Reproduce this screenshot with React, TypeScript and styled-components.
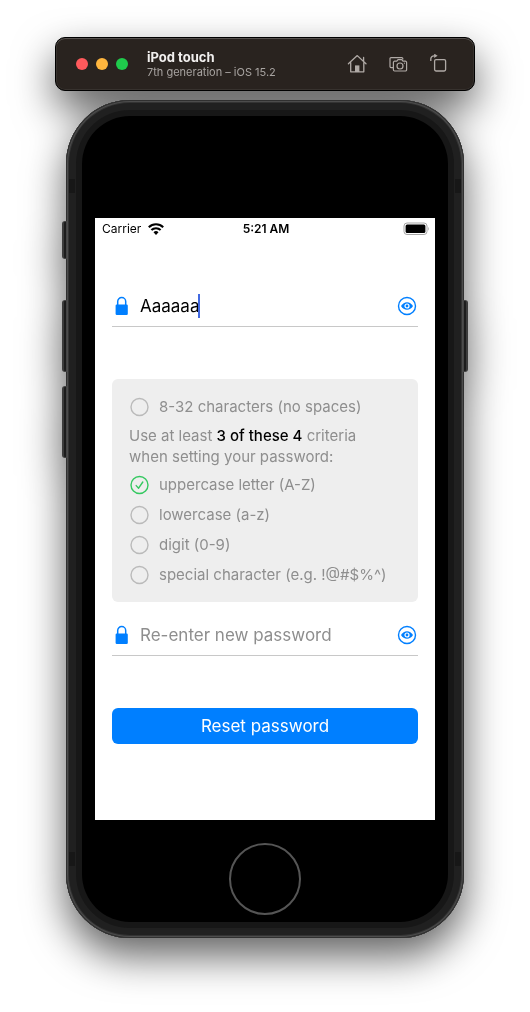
import React, { useState } from "react";
import styled, { createGlobalStyle } from "styled-components";

const blue = "#007fff";

const GlobalStyle = createGlobalStyle`
  * { box-sizing: border-box; }
  body {
    margin: 0;
    background: #fff;
    font-family: Inter, "Liberation Sans", sans-serif;
    color: #000;
  }
  button, input { font: inherit; margin: 0; padding: 0; border: 0; background: none; }
`;

const Page = styled.main`
  display: flex;
  justify-content: center;
  padding: 37px 55px 74px;
`;

const Simulator = styled.div`
  display: flex;
  flex-direction: column;
  gap: 9px;
  width: 100%;
  max-width: 420px;
  filter: drop-shadow(0 18px 20px rgba(0, 0, 0, 0.62));
`;

const TitleBar = styled.header`
  display: flex;
  align-items: center;
  height: 54px;
  padding: 0 25px 0 20px;
  border: 1px solid #000;
  border-radius: 10px;
  background: #29231f;
  box-shadow: inset 0 1px 0 #56514e, inset 0 0 0 1px #37322e;
`;

const Lights = styled.div`
  display: flex;
  gap: 8px;
  margin-right: 19px;
`;

const Light = styled.button<{ $color: string }>`
  width: 12px;
  height: 12px;
  border-radius: 50%;
  background: ${(p) => p.$color};
`;

const Titles = styled.div`
  flex: 1;
`;

const DeviceName = styled.h1`
  margin: 0;
  font-size: 13px;
  line-height: 16px;
  font-weight: 700;
  color: #f1efee;
`;

const DeviceInfo = styled.p`
  margin: 0;
  font-size: 11px;
  line-height: 14px;
  color: #a8a4a1;
`;

const Tools = styled.div`
  display: flex;
  gap: 21px;
`;

const Tool = styled.button`
  display: flex;
  width: 20px;
  height: 20px;
  color: #b0aaa6;
`;

const Phone = styled.section`
  position: relative;
  margin: 0 11px;
  padding: 16px;
  border-radius: 64px;
  background: #171717;
  box-shadow: inset 0 0 0 1px #303030, inset 0 0 0 2px #4c4c4c, inset 0 0 0 3px #333,
    inset 0 0 0 10px #202020;
`;

const Bezel = styled.div`
  padding: 102px 13px 7px;
  border-radius: 48px;
  background: #000;
`;

const SideButton = styled.span<{ $side: "left" | "right"; $top: number; $height: number }>`
  position: absolute;
  top: ${(p) => p.$top}px;
  ${(p) => p.$side}: -4px;
  width: 5px;
  height: ${(p) => p.$height}px;
  border: 1px solid #444;
  border-${(p) => p.$side}: 2px solid #3c3c3c;
  border-radius: ${(p) => (p.$side === "left" ? "3px 0 0 3px" : "0 3px 3px 0")};
  background: #1c1c1c;
`;

const Antenna = styled.span<{ $side: "left" | "right"; $edge: "top" | "bottom" }>`
  position: absolute;
  ${(p) => p.$side}: 3px;
  ${(p) => p.$edge}: ${(p) => (p.$edge === "top" ? 79 : 72)}px;
  width: 6px;
  height: 14px;
  background: #171717;
`;

const Screen = styled.div`
  background: #fff;
`;

const StatusBar = styled.div`
  display: grid;
  grid-template-columns: 1fr auto 1fr;
  align-items: center;
  height: 22px;
  padding: 0 5px 0 7px;
  font-size: 12px;
  line-height: 16px;
`;

const Carrier = styled.span`
  display: flex;
  align-items: center;
  gap: 7px;
`;

const Clock = styled.time`
  font-weight: 600;
`;

const Battery = styled.svg`
  justify-self: end;
`;

const Form = styled.form`
  display: flex;
  flex-direction: column;
  padding: 47px 17px 76px;
`;

const Field = styled.div`
  display: flex;
  align-items: center;
  height: 40px;
  padding: 0 1px 2px 3px;
  border-bottom: 1px solid #c8c8c8;
`;

const FieldBody = styled.div`
  display: flex;
  align-items: center;
  flex: 1;
  min-width: 0;
  margin-left: 11px;
`;

const TextInput = styled.input<{ $fit?: boolean }>`
  ${(p) => (p.$fit ? "field-sizing: content;" : "width: 100%;")}
  min-width: 0;
  font-size: 17px;
  line-height: 24px;
  color: #000;
  outline: none;
  &::placeholder { color: #8e8e8e; opacity: 1; }
`;

const Caret = styled.span`
  width: 2px;
  height: 24px;
  margin-left: -1px;
  background: #4169e1;
`;

const Reveal = styled.button`
  display: flex;
  color: ${blue};
`;

const Panel = styled.section`
  display: flex;
  flex-direction: column;
  gap: 8px;
  margin: 52px 0 14px;
  padding: 18px 17px 17px;
  border-radius: 6px;
  background: #eee;
  color: #8e8e8e;
  font-size: 15px;
`;

const Hint = styled.p`
  margin: 0;
  line-height: 21px;
  strong { font-weight: 500; color: #000; }
`;

const Criteria = styled.div`
  display: flex;
  flex-direction: column;
  gap: 10px;
`;

const Criterion = styled.label`
  display: flex;
  align-items: center;
  gap: 10px;
  height: 20px;
  line-height: 20px;
  white-space: nowrap;
`;

const Mark = styled.span`
  display: grid;
  width: 20px;
  height: 20px;
  > * { grid-area: 1 / 1; }
`;

const MarkInput = styled.input`
  appearance: none;
  width: 20px;
  height: 20px;
  border-radius: 50%;
`;

const HomeButton = styled.button`
  display: block;
  width: 72px;
  height: 72px;
  margin: 23px auto 0;
  border: 2px solid #555;
  border-radius: 50%;
`;

const Submit = styled.button`
  height: 36px;
  margin-top: 52px;
  border-radius: 6px;
  background: ${blue};
  color: #fff;
  font-size: 17px;
`;

const HomeIcon = () => (
  <svg width="20" height="20" viewBox="0 0 20 20" fill="none" stroke="currentColor" strokeWidth="1.3" strokeLinejoin="round" strokeLinecap="round">
    <path d="M1.400 9.800 10.300 1.600l8.700 8.200M3.700 8.600v9.200h13.100V8.600M16.600 6.800V3.400" />
    <path d="M8 18v-6.600h4.400V18z" fill="currentColor" stroke="none" />
  </svg>
);

const CameraIcon = () => (
  <svg width="20" height="20" viewBox="0 0 20 20" fill="none" stroke="currentColor" strokeWidth="1.2" strokeLinejoin="round">
    <path d="M5 13.600H3a1 1 0 0 1-1-1V4.600a1 1 0 0 1 1-1h10.800a1 1 0 0 1 1 1v.8" />
    <path d="M6.600 7.200h2.200l1.200-1.600h3.800L15 7.200h2.400a1.200 1.200 0 0 1 1.200 1.200v7.400a1.200 1.200 0 0 1-1.200 1.200H6.600a1.200 1.200 0 0 1-1.200-1.200V8.400a1.200 1.200 0 0 1 1.200-1.200z" />
    <circle cx="12" cy="12" r="3" />
    <circle cx="16.400" cy="9.200" r=".6" fill="currentColor" stroke="none" />
  </svg>
);

const RotateIcon = () => (
  <svg width="20" height="20" viewBox="0 0 20 20" fill="none" stroke="currentColor" strokeWidth="1.3">
    <rect x="5.600" y="5.600" width="11" height="11.400" rx="1.400" />
    <path d="M1.800 7V5a3.200 3.200 0 0 1 3.200-3.200h1.200" />
    <path d="M5.200-.4 8.600 1.800 5.200 4z" fill="currentColor" stroke="none" />
  </svg>
);

const WifiIcon = () => (
  <svg width="16" height="12" viewBox="0 0 16 12" fill="none" stroke="#000" strokeWidth="2.100">
    <path d="M.8 4.300a10.200 10.200 0 0 1 14.400 0M3.400 7.100a6.500 6.500 0 0 1 9.200 0" />
    <path d="M8 11.900 5.500 9.300a3.500 3.500 0 0 1 5 0z" fill="#000" stroke="none" />
  </svg>
);

const LockIcon = () => (
  <svg width="14" height="20" viewBox="0 0 14 20" fill="none">
    <path d="M2.700 9V5.600a4 4 0 0 1 8 0V9" stroke={blue} strokeWidth="1.500" />
    <rect x=".6" y="8.600" width="12.200" height="10.400" rx="1.200" fill={blue} />
  </svg>
);

const EyeIcon = () => (
  <svg width="20" height="20" viewBox="0 0 20 20" fill="none">
    <circle cx="10" cy="10" r="8.500" stroke="currentColor" strokeWidth="1.400" />
    <path d="M4 10c1.500-2.500 3.600-3.800 6-3.800s4.500 1.300 6 3.800c-1.500 2.500-3.600 3.800-6 3.800S5.500 12.500 4 10z" fill="currentColor" />
    <circle cx="10" cy="10" r="2" stroke="#fff" strokeWidth="1.200" />
  </svg>
);

const MarkIcon = ({ met }: { met: boolean }) => (
  <svg width="20" height="20" viewBox="0 0 20 20" fill="none" stroke={met ? "#34c860" : "#bababa"} strokeWidth="1.400" strokeLinecap="round" strokeLinejoin="round" pointerEvents="none">
    <circle cx="10.500" cy="10" r="8.500" />
    {met && <path d="m7.200 10.600 2.400 2.600 4.200-6.200" />}
  </svg>
);

const CheckRow = ({ text, met = false }: { text: string; met?: boolean }) => (
  <Criterion>
    <Mark>
      <MarkInput type="checkbox" checked={met} readOnly />
      <MarkIcon met={met} />
    </Mark>
    {text}
  </Criterion>
);

export default function App() {
  const [password, setPassword] = useState("Aaaaaa");
  const [repeat, setRepeat] = useState("");

  return (
    <Page>
      <GlobalStyle />
      <Simulator>
        <TitleBar>
          <Lights>
            <Light type="button" aria-label="Close" $color="#ff5a5c" />
            <Light type="button" aria-label="Minimize" $color="#ffb63e" />
            <Light type="button" aria-label="Zoom" $color="#1fcb4c" />
          </Lights>
          <Titles>
            <DeviceName>iPod touch</DeviceName>
            <DeviceInfo>7th generation – iOS 15.2</DeviceInfo>
          </Titles>
          <Tools>
            <Tool type="button" aria-label="Home"><HomeIcon /></Tool>
            <Tool type="button" aria-label="Screenshot"><CameraIcon /></Tool>
            <Tool type="button" aria-label="Rotate"><RotateIcon /></Tool>
          </Tools>
        </TitleBar>
        <Phone>
          <SideButton $side="left" $top={121} $height={38} />
          <SideButton $side="left" $top={200} $height={72} />
          <SideButton $side="left" $top={286} $height={72} />
          <SideButton $side="right" $top={200} $height={72} />
          <Antenna $side="left" $edge="top" />
          <Antenna $side="right" $edge="top" />
          <Antenna $side="left" $edge="bottom" />
          <Antenna $side="right" $edge="bottom" />
          <Bezel>
            <Screen>
              <StatusBar>
                <Carrier>
                  Carrier
                  <WifiIcon />
                </Carrier>
                <Clock>5:21 AM</Clock>
                <Battery width="27" height="14" viewBox="0 0 27 14" fill="none">
                  <rect x="1" y="1" width="23" height="11.500" rx="3" stroke="#a6a6a6" />
                  <rect x="2.600" y="2.600" width="19.800" height="8.300" rx="1.500" fill="#000" />
                  <path d="M25.300 5c1 .4 1 3.200 0 3.600z" fill="#a6a6a6" />
                </Battery>
              </StatusBar>
              <Form onSubmit={(e) => e.preventDefault()}>
                <Field>
                  <LockIcon />
                  <FieldBody>
                    <TextInput
                      $fit
                      aria-label="New password"
                      value={password}
                      onChange={(e) => setPassword(e.target.value)}
                    />
                    <Caret />
                  </FieldBody>
                  <Reveal type="button" aria-label="Show new password"><EyeIcon /></Reveal>
                </Field>
                <Panel>
                  <CheckRow text="8-32 characters (no spaces)" />
                  <Hint>
                    Use at least <strong>3 of these 4</strong> criteria
                    <br />
                    when setting your password:
                  </Hint>
                  <Criteria>
                    <CheckRow text="uppercase letter (A-Z)" met />
                    <CheckRow text="lowercase (a-z)" />
                    <CheckRow text="digit (0-9)" />
                    <CheckRow text="special character (e.g. !@#$%^)" />
                  </Criteria>
                </Panel>
                <Field>
                  <LockIcon />
                  <FieldBody>
                    <TextInput
                      aria-label="Re-enter new password"
                      placeholder="Re-enter new password"
                      value={repeat}
                      onChange={(e) => setRepeat(e.target.value)}
                    />
                  </FieldBody>
                  <Reveal type="button" aria-label="Show repeated password"><EyeIcon /></Reveal>
                </Field>
                <Submit type="submit">Reset password</Submit>
              </Form>
            </Screen>
            <HomeButton type="button" aria-label="Home button" />
          </Bezel>
        </Phone>
      </Simulator>
    </Page>
  );
}
